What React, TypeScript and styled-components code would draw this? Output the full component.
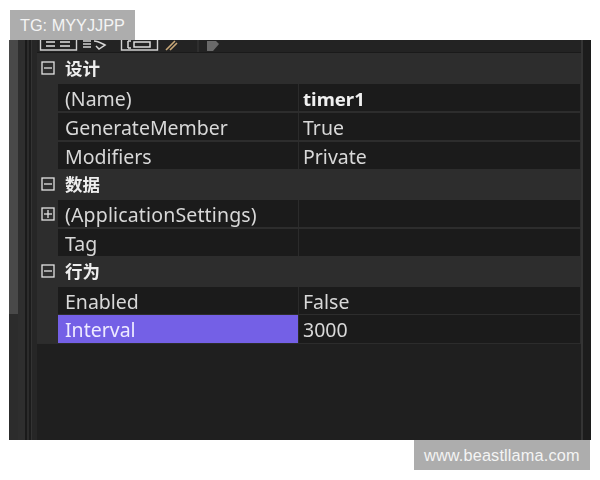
import React from "react";
import styled, { createGlobalStyle } from "styled-components";

const Global = createGlobalStyle`
  html, body { margin: 0; padding: 0; background: #fff; }
  body { width: 600px; height: 480px; overflow: hidden; font-family: "Noto Sans", "Noto Sans CJK SC", sans-serif; }
`;

const Page = styled.div`
  display: flex;
  flex-direction: column;
  width: 600px;
  height: 480px;
  padding-top: 10px;
  box-sizing: border-box;
`;

const Label = styled.div<{ $right?: boolean }>`
  height: 30px;
  line-height: 30px;
  padding: 0 10px;
  background: #adadad;
  color: #f4f4f4;
  font-family: "Liberation Sans", sans-serif;
  font-size: 16.3px;
  letter-spacing: ${(p) => (p.$right ? "0.15px" : "0")};
  box-sizing: border-box;
  width: ${(p) => (p.$right ? "176px" : "125px")};
  margin-left: ${(p) => (p.$right ? "414px" : "10px")};
  white-space: nowrap;
`;

const Frame = styled.div`
  display: flex;
  width: 582px;
  height: 400px;
  margin-left: 9px;
  background: #1f1f1f;
  overflow: hidden;
`;

const SideStrip = styled.div`
  width: 9px;
  background: linear-gradient(#494949 0 274px, #2c2c2c 274px);
  flex: none;
`;

const Gutter = styled.div`
  width: 19px;
  flex: none;
  background: linear-gradient(90deg, #2e2e2e 0 7px, #1a1a1a 7px 9px, #2c2c2c 9px 11px, #1c1c1c 11px 13px, #333 13px 14px, #262626 14px);
`;

const Panel = styled.div`
  width: 544px;
  flex: none;
  display: flex;
  flex-direction: column;
  background: #2d2d2d;
  filter: blur(0.4px);
`;

const Toolbar = styled.div`
  height: 12px;
  display: flex;
  align-items: flex-end;
  background: #232323;
  border-bottom: 1px solid #1a1a1a;
  overflow: hidden;
`;

const ToolIcons = styled.svg`
  display: block;
  flex: none;
`;

const Category = styled.div<{ $h: number }>`
  height: ${(p) => p.$h}px;
  padding-bottom: 2px;
  box-sizing: border-box;
  display: flex;
  align-items: center;
  background: #2d2d2d;
  color: #eeeeee;
  font-size: 17.5px;
  font-weight: 700;
`;

const ToggleSlot = styled.div`
  width: 21px;
  height: 100%;
  flex: none;
  display: flex;
  align-items: center;
  justify-content: center;
`;

const CategoryText = styled.span`
  margin-left: 7px;
`;

const Row = styled.div<{ $h: number; $gap?: number }>`
  height: ${(p) => p.$h}px;
  display: flex;
  background: #2d2d2d;
  margin-bottom: ${(p) => p.$gap ?? 0}px;
  font-size: 19.5px;
  color: #dcdcdc;
`;

const NameCell = styled.div<{ $selected?: boolean; $wide?: boolean }>`
  width: 240px;
  flex: none;
  padding: 1px 0 0 7px;
  box-sizing: border-box;
  display: flex;
  align-items: center;
  white-space: nowrap;
  letter-spacing: ${(p) => (p.$wide ? "0.15px" : "0")};
  background: ${(p) => (p.$selected ? "#7460e6" : "#1b1b1b")};
  color: ${(p) => (p.$selected ? "#eeeaff" : "#d8d8d8")};
`;

const ValueCell = styled.div<{ $bold?: boolean }>`
  flex: 1;
  padding: 1px 0 0 4px;
  margin-right: 1px;
  display: flex;
  align-items: center;
  background: #1b1b1b;
  border-left: 1px solid #2b2b2b;
  font-size: ${(p) => (p.$bold ? "18.6px" : "inherit")};
  font-weight: ${(p) => (p.$bold ? 700 : 400)};
  color: ${(p) => (p.$bold ? "#f0f0f0" : "#d8d8d8")};
`;

const Blank = styled.div`
  flex: 1;
  border-top: 1px solid #2c2c2c;
  background: #1f1f1f;
`;

const RightEdge = styled.div`
  width: 10px;
  flex: none;
  background: linear-gradient(90deg, #343434 0 2px, #1c1c1c 2px);
`;

const Toggle = ({ plus }: { plus?: boolean }) => (
  <svg width="14" height="14" viewBox="0 0 14 14" fill="none" stroke="#e4e4e4" strokeWidth="1.3">
    <rect x="1" y="1" width="12" height="12" />
    <path d="M3 7h8" />
    {plus && <path d="M7 3v8" />}
  </svg>
);

const rows1 = [
  { n: "(Name)", v: "timer1", b: true },
  { n: "GenerateMember", v: "True" },
  { n: "Modifiers", v: "Private" },
];

export default function App() {
  return (
    <Page>
      <Global />
      <Label>TG: MYYJJPP</Label>
      <Frame>
        <SideStrip />
        <Gutter />
        <Panel>
          <Toolbar>
            <ToolIcons width="190" height="12" viewBox="0 0 190 12" fill="none">
              <path d="M3.5 -4h36v14h-36z" stroke="#d0d0d0" strokeWidth="1.4" />
              <path d="M9 2h9M9 6h9M23 2h10M23 6h10" stroke="#e0e0e0" strokeWidth="1.6" />
              <path d="M46 1h8M46 4h8M46 7h8M57 1c4 0 7 2 11 4l-6 4-3-3" stroke="#d4d4d4" strokeWidth="1.5" />
              <path d="M84.5 -4h36v14h-36z" stroke="#d0d0d0" strokeWidth="1.4" />
              <path d="M91 1v7M91 1h3M91 8h3M97 2h16v5H97z" stroke="#dcdcdc" strokeWidth="1.5" />
              <path d="M129 10l9-9M133 10l7-7" stroke="#c9a878" strokeWidth="1.6" />
              <path d="M161 0v12" stroke="#3a3a3a" />
              <path d="M170 1h9l3 3-6 7h-6z" fill="#6a6a6a" />
            </ToolIcons>
          </Toolbar>
          <Category $h={31}>
            <ToggleSlot><Toggle /></ToggleSlot>
            <CategoryText>设计</CategoryText>
          </Category>
          {rows1.map((r) => (
            <Row key={r.n} $h={27} $gap={r.n === "Modifiers" ? 0 : 2}>
              <ToggleSlot />
              <NameCell>{r.n}</NameCell>
              <ValueCell $bold={r.b}>{r.v}</ValueCell>
            </Row>
          ))}
          <Category $h={31}>
            <ToggleSlot><Toggle /></ToggleSlot>
            <CategoryText>数据</CategoryText>
          </Category>
          <Row $h={27} $gap={2}>
            <ToggleSlot><Toggle plus /></ToggleSlot>
            <NameCell $wide>(ApplicationSettings)</NameCell>
            <ValueCell />
          </Row>
          <Row $h={27}>
            <ToggleSlot />
            <NameCell>Tag</NameCell>
            <ValueCell />
          </Row>
          <Category $h={31}>
            <ToggleSlot><Toggle /></ToggleSlot>
            <CategoryText>行为</CategoryText>
          </Category>
          <Row $h={27} $gap={1}>
            <ToggleSlot />
            <NameCell>Enabled</NameCell>
            <ValueCell>False</ValueCell>
          </Row>
          <Row $h={28}>
            <ToggleSlot />
            <NameCell $selected>Interval</NameCell>
            <ValueCell>3000</ValueCell>
          </Row>
          <Blank />
        </Panel>
        <RightEdge />
      </Frame>
      <Label $right>www.beastllama.com</Label>
    </Page>
  );
}
